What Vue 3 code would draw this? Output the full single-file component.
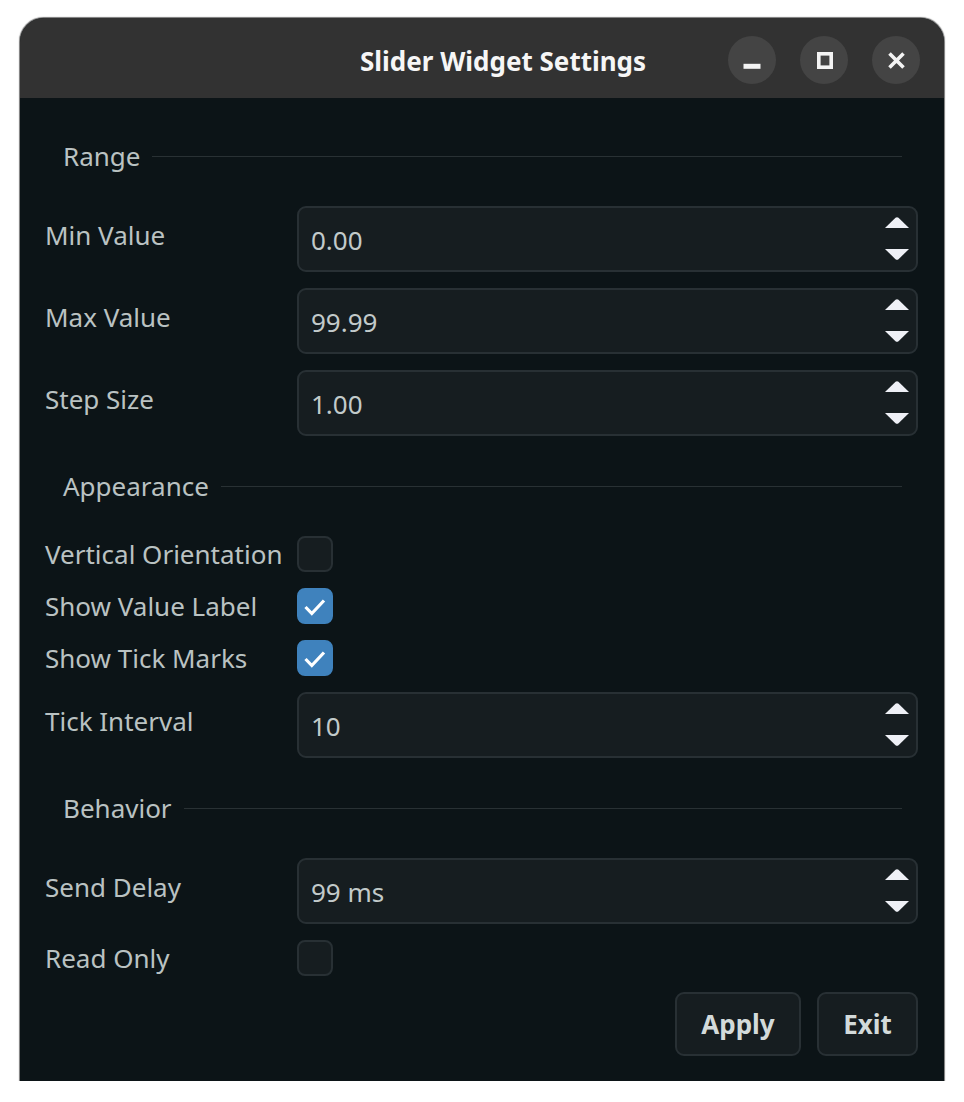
<template>
  <div class="window">
    <header class="titlebar">
      <span class="title">Slider Widget Settings</span>
      <div class="win-buttons">
        <button class="win-btn">
          <svg width="24" height="24" viewBox="0 0 24 24"><rect x="3.5" y="15.8" width="17" height="5" fill="#f4f4f4" /></svg>
        </button>
        <button class="win-btn">
          <svg width="24" height="24" viewBox="0 0 24 24"><rect x="6.8" y="5.8" width="12.4" height="13.4" fill="none" stroke="#f4f4f4" stroke-width="3.6" /></svg>
        </button>
        <button class="win-btn">
          <svg width="24" height="24" viewBox="0 0 24 24"><path d="M5.5 5.5 L19.5 19.5 M19.5 5.5 L5.5 19.5" fill="none" stroke="#f4f4f4" stroke-width="3.6" /></svg>
        </button>
      </div>
    </header>

    <div class="content">
      <div v-for="section in sections" :key="section.name" class="section">
        <div class="heading">
          <span>{{ section.name }}</span>
          <i class="rule"></i>
        </div>
        <div class="rows">
          <div v-for="row in section.rows" :key="row.label" class="row" :class="row.value ? 'spin-row' : 'check-row'">
            <label>{{ row.label }}</label>
            <div v-if="row.value" class="spinbox">
              <span class="value">{{ row.value }}</span>
              <span class="arrows">
                <svg width="24" height="11" viewBox="0 0 24 11"><path d="M0 11 L10.5 .8 Q12 -.4 13.5 .8 L24 11 Z" fill="#eef0f6" /></svg>
                <svg width="24" height="11" viewBox="0 0 24 11"><path d="M0 0 L10.5 10.2 Q12 11.4 13.5 10.2 L24 0 Z" fill="#eef0f6" /></svg>
              </span>
            </div>
            <div v-else class="checkbox" :class="{ checked: row.checked }">
              <svg v-if="row.checked" width="24" height="24" viewBox="0 0 24 24"><path d="M2.5 13 L8.8 19.5 L21 6.5" fill="none" stroke="#fff" stroke-width="3.2" /></svg>
            </div>
          </div>
        </div>
      </div>

      <div class="actions">
        <button class="action apply">Apply</button>
        <button class="action exit">Exit</button>
      </div>
    </div>
  </div>
</template>

<script setup>
const sections = [
  {
    name: "Range",
    rows: [
      { label: "Min Value", value: "0.00" },
      { label: "Max Value", value: "99.99" },
      { label: "Step Size", value: "1.00" },
    ],
  },
  {
    name: "Appearance",
    rows: [
      { label: "Vertical Orientation", checked: false },
      { label: "Show Value Label", checked: true },
      { label: "Show Tick Marks", checked: true },
      { label: "Tick Interval", value: "10" },
    ],
  },
  {
    name: "Behavior",
    rows: [
      { label: "Send Delay", value: "99 ms" },
      { label: "Read Only", checked: false },
    ],
  },
];
</script>

<style>
html,
body {
  background: #fff;
}
</style>

<style scoped>
.window {
  width: 924px;
  height: 1063px;
  margin: 18px 0 0 20px;
  box-sizing: border-box;
  display: flex;
  flex-direction: column;
  background: #0c1417;
  border-radius: 24px 24px 0 0;
  box-shadow: 0 0 1px 0.5px #777;
  overflow: hidden;
  font-family: "Noto Sans", sans-serif;
  font-size: 26px;
  color: #bac2c2;
}

.titlebar {
  position: relative;
  flex: none;
  height: 80px;
  background: #323232;
  display: flex;
  align-items: center;
  justify-content: flex-end;
  padding-right: 24px;
}

.title {
  position: absolute;
  left: 340px;
  top: 23px;
  font-size: 26px;
  font-weight: 700;
  color: #f6f6f6;
  line-height: 40px;
}

.win-buttons {
  display: flex;
  gap: 24px;
  margin-top: 4px;
}

.win-btn {
  width: 48px;
  height: 48px;
  padding: 0;
  border: 0;
  border-radius: 50%;
  background: #444444;
  display: flex;
  align-items: center;
  justify-content: center;
}

.content {
  flex: 1;
  padding: 38px 26px 25px 25px;
  display: flex;
  flex-direction: column;
}

.section + .section {
  margin-top: 30px;
}

.heading {
  height: 40px;
  margin: 0 16px 30px 18px;
  display: flex;
  align-items: center;
  gap: 12px;
  line-height: 40px;
}

.rule {
  flex: 1;
  height: 1px;
  background: #293134;
  margin-top: 1px;
}

.rows {
  display: flex;
  flex-direction: column;
  gap: 16px;
}

.row {
  display: grid;
  grid-template-columns: 252px 1fr;
  align-items: center;
}

.row label {
  line-height: 30px;
}

.spin-row label {
  padding-bottom: 9px;
}

.check-row label {
  padding-bottom: 0;
}

.spinbox {
  height: 66px;
  box-sizing: border-box;
  background: #161d20;
  border: 2px solid #283034;
  border-radius: 9px;
  display: flex;
  align-items: center;
  justify-content: space-between;
  padding: 0 7px 0 12px;
}

.value {
  padding-top: 1px;
  color: #c2caca;
}

.arrows {
  display: flex;
  flex-direction: column;
  gap: 21px;
  margin-bottom: 2px;
}

.arrows svg {
  display: block;
}

.checkbox {
  width: 36px;
  height: 36px;
  box-sizing: border-box;
  background: #161d20;
  border: 2px solid #283034;
  border-radius: 8px;
  display: flex;
  align-items: center;
  justify-content: center;
}

.checkbox.checked {
  background: #3f82bd;
  border-color: #3f82bd;
}

.actions {
  margin-top: 16px;
  display: flex;
  justify-content: flex-end;
  gap: 16px;
}

.action {
  height: 64px;
  box-sizing: border-box;
  background: #161d20;
  border: 2px solid #283034;
  border-radius: 9px;
  padding: 0;
  font-family: inherit;
  font-size: 26px;
  font-weight: 700;
  color: #d3dada;
}

.apply {
  width: 126px;
}

.exit {
  width: 101px;
}
</style>
